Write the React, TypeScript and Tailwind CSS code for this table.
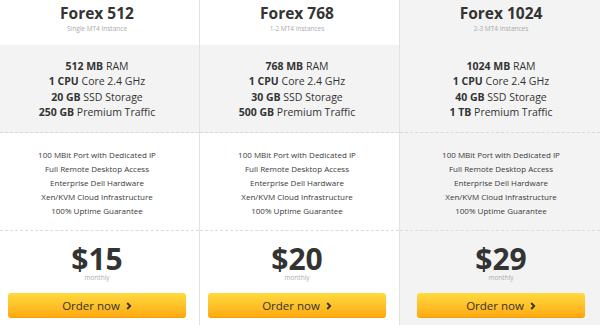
import * as React from "react";

interface Plan {
  name: string;
  sub: string;
  specs: [string, string][];
  price: string;
  pad: string;
  featured?: boolean;
}

const features = [
  "100 MBit Port with Dedicated IP",
  "Full Remote Desktop Access",
  "Enterprise Dell Hardware",
  "Xen/KVM Cloud Infrastructure",
  "100% Uptime Guarantee",
];

const plans: Plan[] = [
  {
    name: "Forex 512",
    sub: "Single MT4 Instance",
    specs: [
      ["512 MB", "RAM"],
      ["1 CPU", "Core 2.4 GHz"],
      ["20 GB", "SSD Storage"],
      ["250 GB", "Premium Traffic"],
    ],
    price: "$15",
    pad: "pl-[8px] pr-[13px]",
  },
  {
    name: "Forex 768",
    sub: "1-2 MT4 Instances",
    specs: [
      ["768 MB", "RAM"],
      ["1 CPU", "Core 2.4 GHz"],
      ["30 GB", "SSD Storage"],
      ["500 GB", "Premium Traffic"],
    ],
    price: "$20",
    pad: "pl-[8px] pr-[13px]",
  },
  {
    name: "Forex 1024",
    sub: "2-3 MT4 Instances",
    specs: [
      ["1024 MB", "RAM"],
      ["1 CPU", "Core 2.4 GHz"],
      ["40 GB", "SSD Storage"],
      ["1 TB", "Premium Traffic"],
    ],
    price: "$29",
    pad: "pl-[17px] pr-[15px]",
    featured: true,
  },
];

function PlanColumn({ plan, last }: { plan: Plan; last: boolean }) {
  return (
    <div
      className={`flex flex-col w-[200px] h-full ${last ? "" : "border-r border-[#e2e2e2]"} ${
        plan.featured ? "bg-[#f3f3f3]" : "bg-white"
      }`}
    >
      {/* Title */}
      <div className={`h-[45px] flex flex-col items-center ${plan.pad}`}>
        <div className="text-[15.5px] leading-[20px] font-bold text-[#333] mt-[3px]">{plan.name}</div>
        <div className="text-[6.5px] leading-[10px] text-[#aaa] mt-[1px]">{plan.sub}</div>
      </div>

      {/* Specs */}
      <div
        className={`h-[88px] bg-[#f3f3f3] border-b border-dashed border-[#d8d8d8] flex flex-col items-center pt-[14px] ${plan.pad}`}
      >
        {plan.specs.map(([b, r]) => (
          <div key={b + r} className="text-[10.5px] leading-[15.3px] text-[#333]">
            <span className="font-bold">{b}</span> {r}
          </div>
        ))}
      </div>

      {/* Features */}
      <div
        className={`h-[98px] border-b border-dashed border-[#dcdcdc] flex flex-col items-center pt-[15px] ${plan.pad}`}
      >
        {features.map((f) => (
          <div key={f} className="text-[8px] leading-[14px] text-[#3a3a3a]">
            {f}
          </div>
        ))}
      </div>

      {/* Price */}
      <div className={`flex flex-col items-center pt-[14px] ${plan.pad}`}>
        <div className="text-[30px] leading-[28px] font-bold text-[#333]">{plan.price}</div>
        <div className="text-[6.5px] leading-[8px] text-[#aaa] mt-[1px]">monthly</div>
      </div>

      {/* Button */}
      <div className={`mt-auto mb-[7px] ${plan.pad}`}>
        <button className="w-full h-[25px] rounded-[3px] bg-gradient-to-b from-[#ffdb3e] to-[#ffa708] text-[11.5px] text-[#333] flex items-center justify-center gap-[6px] shadow-[inset_0_-1px_0_rgba(0,0,0,0.05)]">
          <span>Order now</span>
          <svg width="6" height="8" viewBox="0 0 6 8" fill="none">
            <path d="M1.2 1 L4.2 4 L1.2 7" stroke="#333" strokeWidth="1.8" />
          </svg>
        </button>
      </div>
    </div>
  );
}

export default function App() {
  return (
    <div className="flex w-[600px] h-[325px] overflow-hidden bg-white font-['Open_Sans',sans-serif]">
      {plans.map((p, i) => (
        <PlanColumn key={p.name} plan={p} last={i === plans.length - 1} />
      ))}
    </div>
  );
}
